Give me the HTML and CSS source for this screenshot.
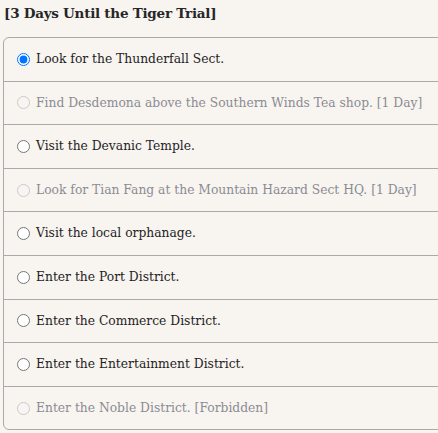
FILE: index.html
```html
<!DOCTYPE html>
<html lang="en">
<head>
    <meta charset="UTF-8">
    <title>Tiger Trial</title>
    <link rel="stylesheet" href="styles.css">
</head>
<body>
    <h3 class="title">[3 Days Until the Tiger Trial]</h3>

    <div class="choices">
        <label class="choice"><input type="radio" name="c" checked> Look for the Thunderfall Sect.</label>
        <label class="choice off"><input type="radio" name="c" disabled> Find Desdemona above the Southern Winds Tea shop. [1 Day]</label>
        <label class="choice"><input type="radio" name="c"> Visit the Devanic Temple.</label>
        <label class="choice off"><input type="radio" name="c" disabled> Look for Tian Fang at the Mountain Hazard Sect HQ. [1 Day]</label>
        <label class="choice"><input type="radio" name="c"> Visit the local orphanage.</label>
        <label class="choice"><input type="radio" name="c"> Enter the Port District.</label>
        <label class="choice"><input type="radio" name="c"> Enter the Commerce District.</label>
        <label class="choice"><input type="radio" name="c"> Enter the Entertainment District.</label>
        <label class="choice off"><input type="radio" name="c" disabled> Enter the Noble District. [Forbidden]</label>
    </div>
</body>
</html>
```

FILE: styles.css
```css
body { margin: 0; background: #f8f4f0; color: #1e1e1e; font-family: "DejaVu Serif", Georgia, serif; overflow: hidden; }
.title { margin: 3px 0 0 4px; font-size: 13.5px; letter-spacing: -0.25px; line-height: 20px; color: #262626; }
.choices { margin: 14px 0 0 3px; width: 470px; border: 1px solid #aaa; border-radius: 6px; }
.choice { display: flex; align-items: center; gap: 6px; padding: 12px 0 12px 10px; font-size: 12.3px; line-height: 18.6px; border-top: 1px solid #aaa; }
.choice:first-child { border-top: none; }
.choice input { margin: 0 0 0 3px; width: 13px; height: 13px; }
.off { color: #8a8c93; }
```
